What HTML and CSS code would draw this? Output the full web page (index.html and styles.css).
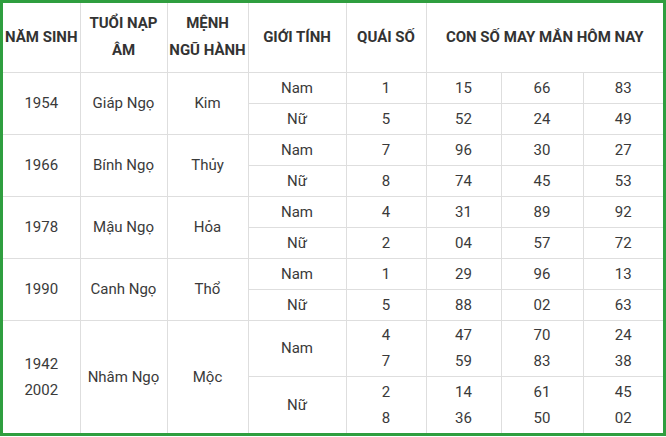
FILE: index.html
```html
<!DOCTYPE html>
<html lang="vi">
<head>
<meta charset="utf-8">
<link rel="stylesheet" href="styles.css">
</head>
<body>
<div class="frame">
<table class="lucky">
<colgroup>
<col class="c1"><col class="c2"><col class="c3"><col class="c4"><col class="c5"><col class="c6"><col class="c7"><col class="c8">
</colgroup>
<thead>
<tr class="head">
<th>NĂM SINH</th>
<th>TUỔI NẠP<br>ÂM</th>
<th>MỆNH<br>NGŨ HÀNH</th>
<th>GIỚI TÍNH</th>
<th>QUÁI SỐ</th>
<th colspan="3">CON SỐ MAY MẮN HÔM NAY</th>
</tr>
</thead>
<tbody>
<tr class="sub"><td rowspan="2">1954</td><td rowspan="2">Giáp Ngọ</td><td rowspan="2">Kim</td><td>Nam</td><td>1</td><td>15</td><td>66</td><td>83</td></tr>
<tr class="sub"><td>Nữ</td><td>5</td><td>52</td><td>24</td><td>49</td></tr>
<tr class="sub"><td rowspan="2">1966</td><td rowspan="2">Bính Ngọ</td><td rowspan="2">Thủy</td><td>Nam</td><td>7</td><td>96</td><td>30</td><td>27</td></tr>
<tr class="sub"><td>Nữ</td><td>8</td><td>74</td><td>45</td><td>53</td></tr>
<tr class="sub"><td rowspan="2">1978</td><td rowspan="2">Mậu Ngọ</td><td rowspan="2">Hỏa</td><td>Nam</td><td>4</td><td>31</td><td>89</td><td>92</td></tr>
<tr class="sub"><td>Nữ</td><td>2</td><td>04</td><td>57</td><td>72</td></tr>
<tr class="sub"><td rowspan="2">1990</td><td rowspan="2">Canh Ngọ</td><td rowspan="2">Thổ</td><td>Nam</td><td>1</td><td>29</td><td>96</td><td>13</td></tr>
<tr class="sub"><td>Nữ</td><td>5</td><td>88</td><td>02</td><td>63</td></tr>
<tr class="dbl"><td rowspan="2" class="two">1942<br>2002</td><td rowspan="2">Nhâm Ngọ</td><td rowspan="2">Mộc</td><td>Nam</td><td class="two">4<br>7</td><td class="two">47<br>59</td><td class="two">70<br>83</td><td class="two">24<br>38</td></tr>
<tr class="dbl last"><td>Nữ</td><td class="two">2<br>8</td><td class="two">14<br>36</td><td class="two">61<br>50</td><td class="two">45<br>02</td></tr>
</tbody>
</table>
</div>
</body>
</html>
```

FILE: styles.css
```css
html, body {
  margin: 0;
  padding: 0;
  background: #fff;
}
.frame {
  width: 666px;
  height: 436px;
  box-sizing: border-box;
  border: 3px solid #2f9e3f;
  overflow: hidden;
}
.lucky {
  width: 660px;
  border-collapse: collapse;
  border-style: hidden;
  table-layout: fixed;
  font-family: Roboto, "Liberation Sans", Arial, sans-serif;
  color: #3a3a3a;
}
.c1 { width: 77px; }
.c2 { width: 87px; }
.c3 { width: 81px; }
.c4 { width: 98px; }
.c5 { width: 80px; }
.c6 { width: 75px; }
.c7 { width: 82px; }
.c8 { width: 80px; }
.lucky th, .lucky td {
  border: 1px solid #dedede;
  padding: 0;
  text-align: center;
  vertical-align: middle;
}
.lucky th {
  font-size: 15px;
  font-weight: 700;
  line-height: 27px;
  color: #333;
}
.lucky td {
  font-size: 15px;
  line-height: 20px;
}
.head { height: 69px; }
.sub { height: 31px; }
.dbl { height: 56px; }
.dbl.last { height: 57px; }
.lucky td.two { line-height: 26px; }
```
